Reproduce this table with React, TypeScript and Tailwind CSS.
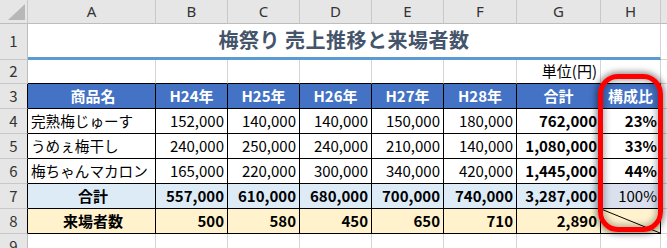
import React from "react";

const JP = "font-['Noto_Sans_CJK_JP','Noto_Sans',sans-serif]";

const colW = ["w-[128px]", "w-[72px]", "w-[72px]", "w-[72px]", "w-[72px]", "w-[73px]", "w-[84px]", "w-[60px]"];
const letters = ["A", "B", "C", "D", "E", "F", "G", "H"];

function RowHead({ n, h, black }: { n: number; h: string; black?: boolean }) {
  return (
    <div
      className={`w-[28px] shrink-0 ${h} bg-[#e6e6e6] border-b border-r ${
        black ? "border-b-[#c8c8c8] border-r-black" : "border-[#c8c8c8] border-r-[#bdbdbd]"
      } flex items-center justify-center text-[15px] text-[#333]`}
    >
      {n}
    </div>
  );
}

type CellProps = {
  i: number;
  children?: React.ReactNode;
  cls?: string;
};

function TCell({ i, children, cls = "" }: CellProps) {
  return (
    <div
      className={`${colW[i]} shrink-0 border-r border-b border-black flex items-center whitespace-nowrap ${
        i === 0 ? "pl-[3px]" : "px-[3px]"
      } ${cls}`}
    >
      {children}
    </div>
  );
}

const data = [
  ["完熟梅じゅーす", "152,000", "140,000", "140,000", "150,000", "180,000", "762,000", "23%"],
  ["うめぇ梅干し", "240,000", "250,000", "240,000", "210,000", "140,000", "1,080,000", "33%"],
  ["梅ちゃんマカロン", "165,000", "220,000", "300,000", "340,000", "420,000", "1,445,000", "44%"],
];

export default function App() {
  return (
    <div className={`relative w-[667px] h-[248px] overflow-hidden bg-white ${JP} text-black`}>
      {/* column header */}
      <div className="flex h-[24px]">
        <div className="w-[28px] shrink-0 bg-[#e6e6e6] border-r border-b border-r-[#c8c8c8] border-b-[#bdbdbd] relative">
          <svg className="absolute left-0 top-0" width="28" height="24" viewBox="0 0 28 24">
            <polygon points="8,20 25,20 25,4" fill="#b7b7b7" />
          </svg>
        </div>
        {letters.map((l, i) => (
          <div
            key={l}
            className={`${colW[i]} shrink-0 bg-[#e6e6e6] border-r border-b border-r-[#c8c8c8] border-b-[#bdbdbd] flex items-center justify-center text-[15px] text-[#333] font-['Noto_Sans',sans-serif]`}
          >
            {l}
          </div>
        ))}
        <div className="flex-1 bg-[#e6e6e6] border-b border-b-[#bdbdbd]" />
      </div>

      {/* row 1 */}
      <div className="flex h-[36px]">
        <RowHead n={1} h="h-[36px]" />
        <div className="w-[633px] shrink-0 border-r border-r-[#d4d4d4] border-b-[3px] border-b-[#5b9bd5] flex items-center justify-center pb-[1px]">
          <span className="text-[20px] font-bold text-[#44546a] tracking-[0.5px]">梅祭り 売上推移と来場者数</span>
        </div>
        <div className="flex-1 border-b border-[#d4d4d4]" />
      </div>

      {/* row 2 */}
      <div className="flex h-[24px]">
        <RowHead n={2} h="h-[24px]" />
        {letters.map((l, i) => (
          <div
            key={l}
            className={`${colW[i]} shrink-0 border-r border-b border-r-[#d4d4d4] border-b-black flex items-center justify-end px-[3px] text-[15px]`}
          >
            {i === 6 ? "単位(円)" : ""}
          </div>
        ))}
        <div className="flex-1 border-b border-[#d4d4d4]" />
      </div>

      {/* row 3 header */}
      <div className="flex h-[25px]">
        <RowHead n={3} h="h-[25px]" black />
        {["商品名", "H24年", "H25年", "H26年", "H27年", "H28年", "合計", "構成比"].map((t, i) => (
          <TCell key={t} i={i} cls="bg-[#4472c4] justify-center text-white font-bold text-[15px]">
            {t}
          </TCell>
        ))}
        <div className="flex-1 border-b border-[#d4d4d4]" />
      </div>

      {data.map((r, ri) => (
        <div key={ri} className="flex h-[25px]">
          <RowHead n={4 + ri} h="h-[25px]" black />
          {r.map((t, i) => (
            <TCell
              key={i}
              i={i}
              cls={`${i === 0 ? "justify-start text-[14.6px]" : "justify-end text-[15px]"} ${i >= 6 ? "font-bold" : ""}`}
            >
              {t}
            </TCell>
          ))}
          <div className="flex-1 border-b border-[#d4d4d4]" />
        </div>
      ))}

      {/* row 7 */}
      <div className="flex h-[25px]">
        <RowHead n={7} h="h-[25px]" black />
        {["合計", "557,000", "610,000", "680,000", "700,000", "740,000", "3,287,000", "100%"].map((t, i) => (
          <TCell
            key={i}
            i={i}
            cls={`text-[15px] ${i === 7 ? "bg-[#dae0ee]" : "bg-[#ddebf7]"} ${
              i === 0 ? "justify-center font-bold" : i === 7 ? "justify-end" : "justify-end font-bold"
            }`}
          >
            {t}
          </TCell>
        ))}
        <div className="flex-1 border-b border-[#d4d4d4]" />
      </div>

      {/* row 8 */}
      <div className="flex h-[25px]">
        <RowHead n={8} h="h-[25px]" black />
        {["来場者数", "500", "580", "450", "650", "710", "2,890", ""].map((t, i) => (
          <TCell
            key={i}
            i={i}
            cls={`relative text-[15px] bg-[#fff2cc] font-bold ${i === 0 ? "justify-center" : "justify-end"}`}
          >
            {t}
            {i === 7 && (
              <svg className="absolute left-0 top-0" width="60" height="25" viewBox="0 0 60 25">
                <line x1="0" y1="0" x2="59" y2="24" stroke="black" strokeWidth="1" />
              </svg>
            )}
          </TCell>
        ))}
        <div className="flex-1 border-b border-[#d4d4d4]" />
      </div>

      {/* row 9 */}
      <div className="flex h-[25px]">
        <RowHead n={9} h="h-[25px]" />
        {letters.map((l, i) => (
          <div key={l} className={`${colW[i]} shrink-0 border-r border-b border-[#d4d4d4]`} />
        ))}
        <div className="flex-1 border-b border-[#d4d4d4]" />
      </div>

      {/* red highlight */}
      <div className="absolute left-[598px] top-[74px] w-[65px] h-[158px] rounded-[20px] border-[5px] border-[#ff0000] shadow-[0_0_6px_2px_rgba(0,0,0,0.45),inset_0_0_6px_2px_rgba(0,0,0,0.3)] pointer-events-none" />
    </div>
  );
}
